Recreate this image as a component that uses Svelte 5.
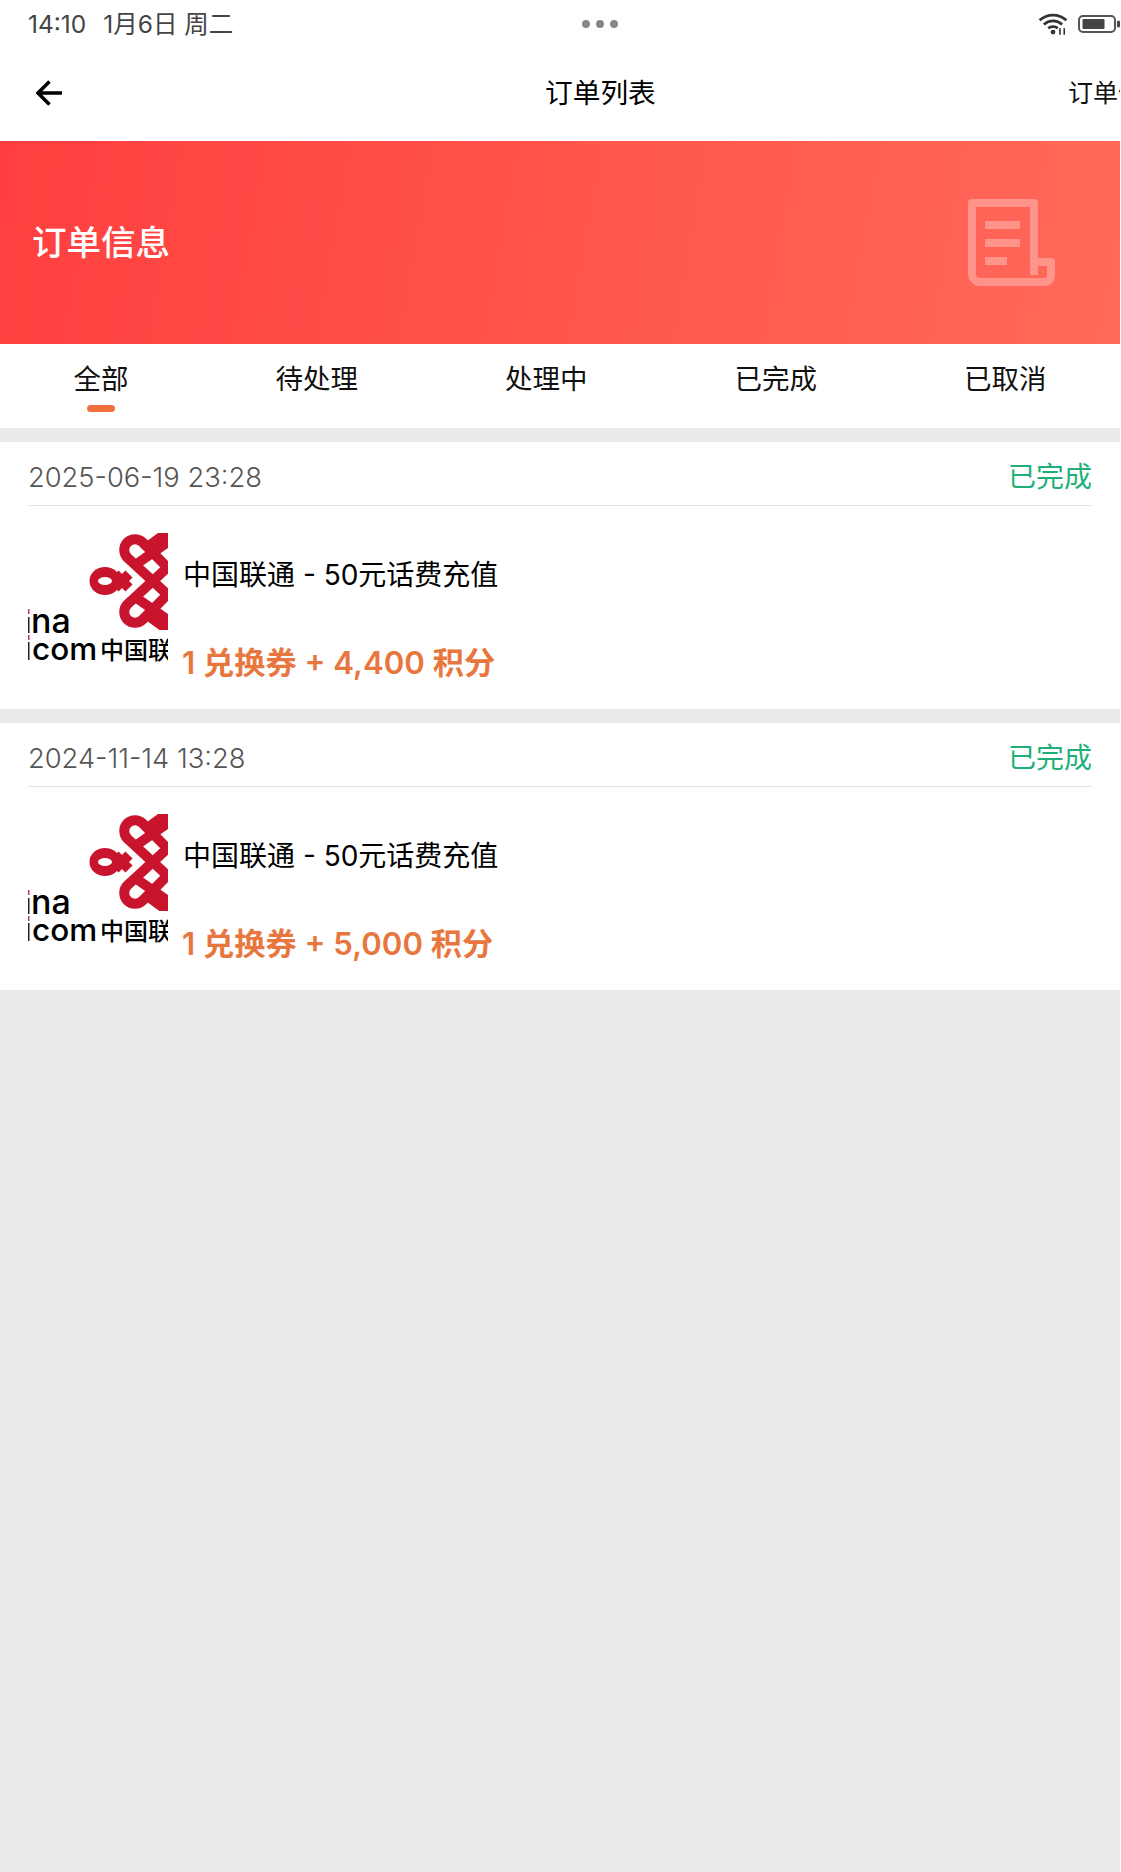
<script>
  const tabs = ['全部', '待处理', '处理中', '已完成', '已取消'];
  const orders = [
    { date: '2025-06-19 23:28', points: '1 兑换券 + 4,400 积分' },
    { date: '2024-11-14 13:28', points: '1 兑换券 + 5,000 积分' }
  ];
  const strands = [
    'M140 62 99.400 24.600A10.700 10.700 0 0 1 114.600 9.400L140 35',
    'M110 30 140 9',
    'M122 12 133 4H140'
  ];
</script>

<div class="page">
  <header class="status">
    <div class="clock"><span>14:10</span><span>1月6日 周二</span></div>
    <div class="dots"><i></i><i></i><i></i></div>
    <div class="sys">
      <svg class="wifi" viewBox="0 0 28 20" width="30" height="22">
        <path d="M1.500 6.500C8.500 0 19.500 0 26.500 6.500" />
        <path d="M5.500 10.500C10.500 6 17.500 6 22.500 10.500" />
        <path d="M9.500 14C12 12 16 12 18.500 14" />
        <circle cx="14" cy="17.500" r="2.200" />
        <path class="thin" d="M20.500 14v6M24.500 14v6" />
      </svg>
      <svg class="battery" viewBox="0 0 42 18" width="42" height="18">
        <rect x="1" y="1" width="36" height="16" rx="4" class="shell" />
        <rect x="4.500" y="4" width="22" height="10" rx="1" class="level" />
        <rect x="39" y="5.500" width="3" height="7" rx="1.500" class="level" />
      </svg>
    </div>
  </header>

  <nav class="bar">
    <svg class="back" viewBox="0 0 26 26" width="26" height="26">
      <path d="M26 13H2M13.500 1.500 2 13l11.500 11.500" />
    </svg>
    <h1>订单列表</h1>
    <div class="more"><span>订单信息</span></div>
  </nav>

  <section class="hero">
    <h2>订单信息</h2>
    <svg class="doc" viewBox="0 0 88 88" width="88" height="88">
      <path class="line" d="M12 83a8 8 0 0 1-8-8V4h62v72" />
      <path class="line" d="M66 63h17v14a6 6 0 0 1-6 6H12" />
      <path class="line" d="M17 26h35M17 44h35M17 62h22" />
    </svg>
  </section>

  <div class="tabs">
    {#each tabs as tab, i}
      <div class="tab">
        <span>{tab}</span>
        {#if i === 0}<b></b>{/if}
      </div>
    {/each}
  </div>

  {#each orders as order}
    <article class="card">
      <div class="head">
        <span class="date">{order.date}</span>
        <span class="state">已完成</span>
      </div>
      <div class="body">
        <svg class="logo" viewBox="0 0 140 132" width="140" height="132">
          <ellipse cx="77" cy="48" rx="15.500" ry="14" class="ring" />
          <g class="knot">
            <path d="M87 41 101 55M87 55 101 41" />
            {#each strands as d}
              <path {d} />
              <path {d} transform="matrix(1 0 0 -1 0 96)" />
            {/each}
          </g>
          <ellipse cx="77" cy="48" rx="7" ry="4" class="hole" />
          <rect x="0" y="76" width="1.500" height="5" fill="#b8404f" />
          <rect x="0" y="84" width="1.500" height="16" fill="#222" />
          <rect x="0" y="102" width="1.500" height="5" fill="#b8404f" />
          <rect x="0" y="109" width="1.500" height="18" fill="#222" />
          <text x="3" y="100" class="en na">na</text>
          <text x="4" y="127" class="en">com</text>
          <text x="72" y="126" class="cn">中国联通</text>
        </svg>
        <div class="info">
          <div class="title">中国联通 - 50元话费充值</div>
          <div class="points">{order.points}</div>
        </div>
      </div>
    </article>
  {/each}
</div>

<style>
  :global(body) {
    margin: 0;
    background: #fff;
  }
  .page {
    box-sizing: border-box;
    width: 1120px;
    min-height: 1872px;
    background: #eaeaea;
    font-family: Inter, "Noto Sans CJK SC", sans-serif;
    overflow: hidden;
  }
  .status {
    height: 47px;
    background: #fff;
    display: grid;
    grid-template-columns: 1fr auto 1fr;
    align-items: center;
    padding: 0 0 0 28px;
    box-sizing: border-box;
    width: 1121px;
  }
  .clock {
    display: flex;
    align-items: center;
    gap: 17px;
    font-size: 24.500px;
    line-height: 30px;
    color: #444;
  }
  .dots {
    display: flex;
    gap: 6px;
    margin-left: 50px;
  }
  .dots i {
    width: 8px;
    height: 8px;
    border-radius: 50%;
    background: #888;
  }
  .sys {
    display: flex;
    justify-content: flex-end;
    align-items: center;
    gap: 10px;
    padding-right: 1px;
  }
  .wifi path {
    fill: none;
    stroke: #333;
    stroke-width: 2.600;
  }
  .wifi circle {
    fill: #333;
  }
  .wifi .thin {
    stroke-width: 1.500;
  }
  .shell {
    fill: none;
    stroke: #555;
    stroke-width: 2;
  }
  .level {
    fill: #444;
  }
  .bar {
    height: 94px;
    background: #fff;
    display: flex;
    align-items: center;
    position: relative;
    padding: 0 0 2px 36px;
    box-sizing: border-box;
  }
  .back path {
    fill: none;
    stroke: #000;
    stroke-width: 3.500;
  }
  .bar h1 {
    position: absolute;
    left: 545px;
    top: 25.500px;
    margin: 0;
    font-size: 27.700px;
    line-height: 40px;
    font-weight: 400;
    color: #000;
  }
  .more {
    position: absolute;
    left: 1068px;
    top: 25.500px;
    line-height: 40px;
    width: 53px;
    overflow: hidden;
    white-space: nowrap;
    font-size: 25px;
    color: #111;
  }
  .hero {
    height: 203px;
    background: linear-gradient(100deg, #ff3f3f 0%, #ff6a5a 100%);
    display: flex;
    align-items: center;
    justify-content: space-between;
    padding: 0 64px 0 32px;
  }
  .hero h2 {
    margin: -5px 0 0;
    font-size: 34.500px;
    font-weight: 500;
    color: #fff;
  }
  .doc {
    opacity: 0.3;
  }
  .doc path {
    fill: none;
    stroke: #fff;
    stroke-width: 8;
    stroke-linejoin: round;
  }
  .tabs {
    height: 84px;
    background: #fff;
    display: flex;
    margin-bottom: 14px;
  }
  .tab {
    flex: auto;
    position: relative;
    text-align: center;
    padding-top: 15px;
    font-size: 27.500px;
    line-height: 40px;
    color: #111;
  }
  .tab b {
    position: absolute;
    left: 50%;
    top: 61px;
    width: 28px;
    height: 7px;
    margin-left: -14px;
    border-radius: 4px;
    background: #f0703c;
  }
  .card {
    height: 267px;
    margin-bottom: 14px;
    background: #fff;
    padding: 0 28px;
    box-sizing: border-box;
  }
  .head {
    height: 64px;
    border-bottom: 1px solid #e3e3e3;
    box-sizing: border-box;
    display: flex;
    justify-content: space-between;
    align-items: center;
  }
  .date {
    padding-top: 7px;
    font-size: 27.300px;
    font-weight: 300;
    color: #555;
  }
  .state {
    padding-top: 3px;
    font-size: 28px;
    color: #1fb07a;
  }
  .body {
    display: flex;
    padding-top: 27px;
    gap: 14px;
  }
  .logo {
    flex: none;
  }
  .ring {
    fill: #c8142c;
  }
  .hole {
    fill: #fff;
  }
  .knot {
    fill: none;
    stroke: #c8142c;
    stroke-width: 10;
  }
  .en {
    font-family: Inter, sans-serif;
    font-size: 31.500px;
    font-weight: 500;
    fill: #000;
  }
  .en.na {
    font-size: 34px;
  }
  .cn {
    font-family: "Noto Sans CJK SC", sans-serif;
    font-size: 24px;
    font-weight: 500;
    fill: #000;
  }
  .info {
    display: flex;
    flex-direction: column;
  }
  .title {
    margin: 22px 0 0 1px;
    font-size: 28px;
    line-height: 40px;
    color: #000;
  }
  .points {
    margin-top: 48px;
    font-size: 31.200px;
    line-height: 40px;
    font-weight: 600;
    color: #e8773f;
  }
</style>
